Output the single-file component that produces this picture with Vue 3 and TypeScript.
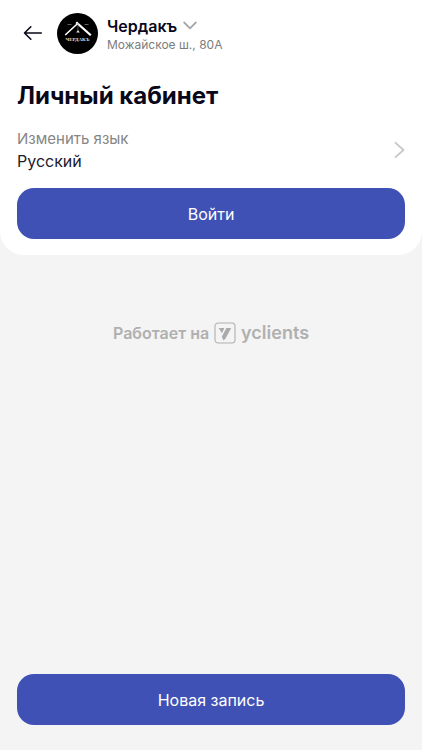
<script setup lang="ts">
import { ref } from 'vue'

const branch = ref({ name: 'Чердакъ', address: 'Можайское ш., 80А' })
const language = ref('Русский')
</script>

<template>
  <div class="page">
    <main class="card">
      <header class="header">
        <button class="back" type="button" aria-label="Назад">
          <svg width="20" height="16" viewBox="0 0 20 16" fill="none" stroke="currentColor" stroke-width="1.6" stroke-linecap="round" stroke-linejoin="round">
            <path d="M18.3 8H1.5M7.8 1.8L1.5 8l6.3 6.2" />
          </svg>
        </button>
        <div class="avatar">
          <svg width="28" height="16" viewBox="0 0 28 16" fill="none">
            <path d="M1.2 14L14.2 2" stroke="#fff" stroke-width="1.6" />
            <path d="M12.2 1.2L26.8 14.2" stroke="#fff" stroke-width="2.2" />
            <path d="M14 2v8" stroke="#888" stroke-width=".6" />
            <path d="M14 9.200l1.800 2.400h-3.600z" fill="#eee" />
            <path d="M3.500 3.500h4M20.500 3.500h4" stroke="#777" stroke-width=".8" />
          </svg>
          <span class="avatar-name">ЧЕРДАКЪ</span>
        </div>
        <button class="branch" type="button">
          <span class="branch-name">
            {{ branch.name }}
            <svg width="14" height="9" viewBox="0 0 14 9" fill="none" stroke="#a6a6a6" stroke-width="1.8" stroke-linecap="round" stroke-linejoin="round">
              <path d="M1.2 1.5L7 7.3l5.8-5.8" />
            </svg>
          </span>
          <span class="branch-address">{{ branch.address }}</span>
        </button>
      </header>

      <h1 class="title">Личный кабинет</h1>

      <button class="language" type="button">
        <span class="language-text">
          <span class="language-label">Изменить язык</span>
          <span class="language-value">{{ language }}</span>
        </span>
        <svg width="12" height="18" viewBox="0 0 12 18" fill="none" stroke="#c8c8c8" stroke-width="1.8" stroke-linecap="round" stroke-linejoin="round">
          <path d="M2.500 1.800L10.500 9L2.500 16.200" />
        </svg>
      </button>

      <button class="primary" type="button">Войти</button>
    </main>

    <a class="powered" href="#">
      <span>Работает на</span>
      <svg width="22" height="22" viewBox="0 0 22 22" fill="none">
        <rect x="1" y="1" width="20" height="20" rx="3.2" stroke="#b0b0b0" stroke-width="1.1" />
        <path d="M4.700 6h5.600l-2.300 5.200z" fill="#aaa" />
        <path d="M12.400 6h4.800l-5.700 10.600-2 1.800L7.800 14.800z" fill="#aaa" />
      </svg>
      <span class="brand">yclients</span>
    </a>

    <footer class="footer">
      <button class="primary" type="button">Новая запись</button>
    </footer>
  </div>
</template>

<style>
body {
  background: #f4f4f4;
}
</style>

<style scoped>
.page {
  display: flex;
  flex-direction: column;
  min-height: 100vh;
  background: #f4f4f4;
  color: #08081a;
  font-family: Inter, "Liberation Sans", sans-serif;
}

button {
  margin: 0;
  padding: 0;
  border: 0;
  background: none;
  color: inherit;
  font: inherit;
  text-align: left;
  cursor: pointer;
}

svg {
  display: block;
  flex: none;
}

.card {
  display: flex;
  flex-direction: column;
  padding: 0 17px 16px;
  border-radius: 0 0 24px 24px;
  background: #fff;
}

.header {
  display: flex;
  align-items: center;
  height: 66px;
}

.back {
  display: flex;
  justify-content: center;
  width: 32px;
  margin-right: 8px;
}

.avatar {
  display: flex;
  flex: none;
  flex-direction: column;
  align-items: center;
  width: 41px;
  height: 41px;
  margin-right: 9px;
  padding-top: 8px;
  box-sizing: border-box;
  border-radius: 50%;
  background: #000;
}

.avatar-name {
  color: #ddd;
  font: bold 5px/6px "Liberation Serif", serif;
}

.branch {
  display: flex;
  flex-direction: column;
  padding-top: 3px;
}

.branch-name {
  display: flex;
  align-items: center;
  gap: 6px;
  font-size: 16px;
  font-weight: 600;
  line-height: 20px;
}

.branch-address {
  color: #7c7c7c;
  font-size: 12px;
  line-height: 18px;
}

.title {
  margin: 15px 0 0;
  font-size: 24px;
  font-weight: 700;
  line-height: 30px;
}

.language {
  display: flex;
  align-items: center;
  justify-content: space-between;
  margin: 16px 0 15px;
}

.language-text {
  display: flex;
  flex-direction: column;
  font-size: 16px;
  line-height: 23px;
}

.language-label {
  color: #858585;
  font-size: 15px;
}

.language-value {
  color: #20202c;
}

.primary {
  width: 100%;
  height: 51px;
  border-radius: 17px;
  background: #3f51b5;
  color: #fff;
  font-size: 16px;
  line-height: 24px;
  text-align: center;
}

.powered {
  display: flex;
  align-items: center;
  justify-content: center;
  gap: 5px;
  margin-top: 66px;
  color: #b0b0b0;
  font-size: 16px;
  font-weight: 600;
  line-height: 24px;
  text-decoration: none;
}

.brand {
  font-size: 18px;
}

.footer {
  margin-top: auto;
  padding: 24px 17px 25px;
}
</style>
